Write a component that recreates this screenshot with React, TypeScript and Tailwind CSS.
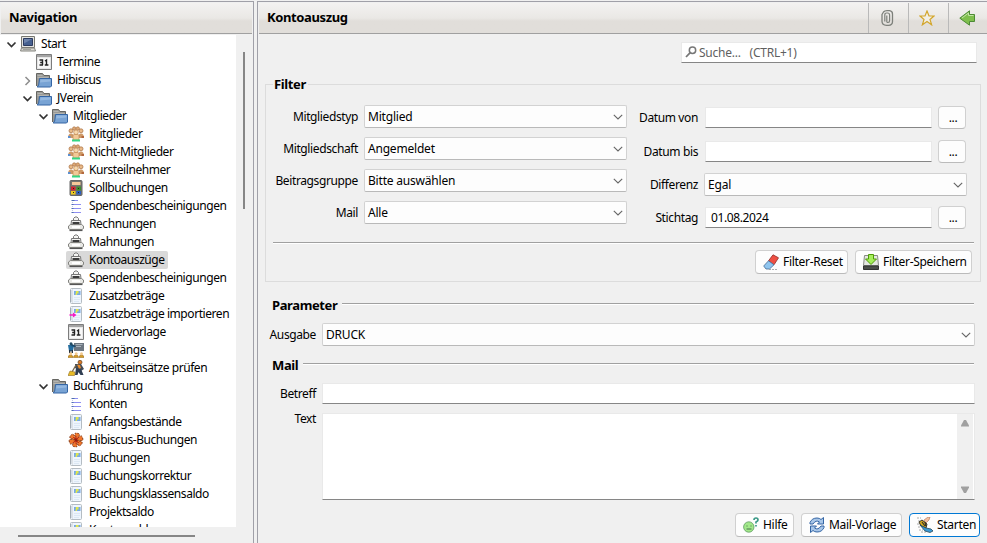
import { ReactNode } from "react";

type IconName =
  | "computer" | "calendar" | "folder" | "people" | "calc" | "list" | "printer"
  | "doc" | "docImport" | "teacher" | "worker" | "flower";

function Glyph({ name }: { name: IconName }) {
  switch (name) {
    case "computer":
      return (
        <>
          <path d="M1.500.5h13v11h-13z" fill="#e4e4e0" stroke="#777770" />
          <path d="M3.500 2.500h9v7h-9z" fill="#46608f" stroke="#2c3b60" />
          <path d="M4 3h8L4 7.500z" fill="#6d83ab" />
          <path d="M1.500 12h13l1 3H.5z" fill="#d8d8d3" stroke="#85857f" />
          <path d="M3 13.500h8" stroke="#a3a39d" />
        </>
      );
    case "calendar":
      return (
        <>
          <path d="M.5.5h15v15H.5z" fill="#e6e6e6" stroke="#7c7c7c" />
          <path d="M1 1h14v2H1z" fill="#a4a4a4" />
          <path d="M2 4h12v10H2z" fill="#f8f8f8" />
          <path d="M3.500 6h3v5M3.500 11h3.500M4.200 8.500h2.500M9 7l1.500-1v5M8.800 11h3.600" fill="none" stroke="#222" strokeWidth="1.400" />
        </>
      );
    case "folder":
      return (
        <>
          <path d="M.5 14V1.500h6l1.500 2h5.500v10" fill="#9a9a96" stroke="#666662" />
          <path d="M1.500 3.500h5M1.500 5.500h11" stroke="#b4b4b0" />
          <path d="M3.500 6.500h12v7.500l-1 1H1.200l1.500-2z" fill="#78a3d4" stroke="#3465a4" />
          <path d="M4.500 7.500h10v2l-10.500 1z" fill="#94b8e0" />
        </>
      );
    case "people":
      return (
        <>
          <path d="M0 12q0-4.500 3-4.500T6 12zM10 12q0-4.500 3-4.500t3 4.500z" fill="#cf9a68" />
          <path d="M0 10h2.500v2H0z" fill="#5b8fd0" />
          <path d="M13.500 10H16v2h-2.500z" fill="#b3683e" />
          <circle cx="3" cy="4.800" r="2" fill="#e9b987" stroke="#a66b3c" strokeWidth=".7" />
          <circle cx="13" cy="4.800" r="2" fill="#e9b987" stroke="#a66b3c" strokeWidth=".7" />
          <circle cx="6.200" cy="2.500" r="1.700" fill="#dca875" stroke="#a66b3c" strokeWidth=".6" />
          <circle cx="9.800" cy="2.500" r="1.700" fill="#dca875" stroke="#a66b3c" strokeWidth=".6" />
          <path d="M5 14V9q3-2 6 0v5z" fill="#f1c997" stroke="#bd8551" strokeWidth=".6" />
          <circle cx="8" cy="6.300" r="2.300" fill="#f7d9ad" stroke="#bd8551" strokeWidth=".7" />
          <path d="M4 13.500h8v2H4z" fill="#35d683" />
        </>
      );
    case "calc":
      return (
        <>
          <rect x="2" y=".5" width="12" height="15" rx="1" fill="#77756f" stroke="#666" />
          <path d="M4 2h8.500v3H4z" fill="#f6c999" />
          <path d="M3 6.500h4.500v4H3z" fill="#cf2430" />
          <path d="M8.500 6.500H13v4H8.500z" fill="#3b8f2d" />
          <path d="M3 11h4.500v3.500H3z" fill="#f0cb1e" />
          <path d="M8.500 11H13v3.500H8.500z" fill="#2b5fc4" />
          <path d="M5 8.500h1M10 8.500h1M5 12.500h1M10 12.500h1" stroke="#222" />
        </>
      );
    case "list":
      return (
        <>
          <path d="M4.500 2v12" stroke="#c3c3ee" strokeDasharray="1 1" />
          <path d="M5 2.500h5M5 6.500h8M5 10.500h8M5 14.500h8" stroke="#8f8ff2" strokeWidth="1.200" />
          <path d="M3.500 2.500h3M3.500 6.500h2M3.500 10.500h2M3.500 14.500h2" stroke="#4d6fae" strokeWidth="1.200" />
        </>
      );
    case "printer":
      return (
        <>
          <path d="M5.500 5V2.500L7 1h2l1.500 1.500V5" fill="#f4f4f2" stroke="#777" />
          <path d="M3.500 4.500h9l.5 4H3z" fill="#f2f2f0" stroke="#777" />
          <path d="M4.500 6h7v2.500h-7z" fill="#3c3c3c" />
          <path d="M.5 12.500V10L2.500 8.500h11l2 1.500v2.500l-1.500 1H2z" fill="#e9e9e6" stroke="#83837f" />
          <path d="M4 10h8v2H4z" fill="#fff" />
          <path d="M1.500 14.500h13" stroke="#555" strokeWidth="1.200" />
        </>
      );
    case "doc":
    case "docImport":
      return (
        <>
          <rect x="2.500" y=".5" width="11" height="15" rx="1" fill="#eef5fd" stroke="#b4bcc3" />
          <path d="M4.500 1v14" stroke="#dde2e7" />
          <path d="M2 3h1.500M2 5h1.500M2 7h1.500M2 9h1.500M2 11h1.500M2 13h1.500" stroke="#909aa3" />
          <path d="M6 3h6.500v4H6z" fill="#78a9e6" />
          <path d="M8 3h2.500v2.500H9V7H7.500z" fill="#dfe64a" />
          <path d="M6 9.500h6M6 11.500h6M6 13.500h5" stroke="#dce8f4" />
          {name === "docImport" && <path d="M1.500 8.200H5V6.500l3.500 2.500L5 11.500V9.800H1.500z" fill="#f51ac4" />}
        </>
      );
    case "teacher":
      return (
        <>
          <path d="M6 1h10v8H6z" fill="#6c7681" />
          <path d="M7.500 2.500h7M8 4.500h5" stroke="#aab4bd" />
          <path d="M0 3h3l3 1-1 5H1z" fill="#246d9f" />
          <path d="M4 2l4 2-1 1-4-1z" fill="#194769" />
          <circle cx="3" cy="1.700" r="1.500" fill="#234c65" />
          <path d="M1 8h1.500v3H1zM3.500 8h1.500v3H3.500z" fill="#24313e" />
          <path d="M0 15.500q0-2.500 2.500-2.500T5 15.500zM5.500 15.500q0-2.500 2.500-2.500t2.500 2.500zM11 15.500q0-2.500 2.500-2.500t2.500 2.500z" fill="#d79b22" stroke="#8a621d" strokeWidth=".5" />
          <circle cx="2.700" cy="11.800" r="1.500" fill="#f1c990" />
          <circle cx="8.200" cy="11.800" r="1.500" fill="#f1c990" />
          <circle cx="13.500" cy="11.800" r="1.500" fill="#f1c990" />
        </>
      );
    case "worker":
      return (
        <>
          <circle cx="12" cy="2.300" r="2" fill="#dc7b28" stroke="#604221" strokeWidth=".7" />
          <path d="M7 4l6 0 3 5-3 2-6-3z" fill="#454d58" />
          <path d="M9 4.500l3 .5 1 3-2 1z" fill="#ec8c29" />
          <path d="M8 8l5 1 2.500 6h-3l-2-3-1 3H7z" fill="#303e52" />
          <path d="M8 5L4 12" stroke="#7b694b" strokeWidth="1.300" />
          <path d="M2 11l5 1-.5 3.500H0z" fill="#e9bc25" stroke="#91702a" strokeWidth=".6" />
        </>
      );
    case "flower":
      return (
        <>
          {[0, 60, 120, 180, 240, 300].map((a) => (
            <path key={a} d="M8 8L5.600 3Q5.500.500 8 1.200q2.700-.5 2.300 2z" fill="#f0772c" stroke="#7d3412" strokeWidth=".9" strokeDasharray="2 1" transform={`rotate(${a + 12} 8 8)`} />
          ))}
          <path d="M5 5l6 6M5 11l6-6M8 4v8" stroke="#c7260d" strokeWidth=".9" />
          <circle cx="8" cy="8" r="1.400" fill="#971d10" />
        </>
      );
  }
}

function TreeIcon({ name }: { name: IconName }) {
  return (
    <svg viewBox="0 0 16 16" className="h-4 w-4 shrink-0"><Glyph name={name} /></svg>
  );
}

type Node = { label: string; icon: IconName; indent: string; open?: boolean; selected?: boolean };
const L1 = "pl-[3px]";
const L2 = "pl-[19px]";
const L3 = "pl-[35px]";
const L4 = "pl-[51px]";

const nodes: Node[] = [
  { label: "Start", icon: "computer", indent: L1, open: true },
  { label: "Termine", icon: "calendar", indent: L2 },
  { label: "Hibiscus", icon: "folder", indent: L2, open: false },
  { label: "JVerein", icon: "folder", indent: L2, open: true },
  { label: "Mitglieder", icon: "folder", indent: L3, open: true },
  { label: "Mitglieder", icon: "people", indent: L4 },
  { label: "Nicht-Mitglieder", icon: "people", indent: L4 },
  { label: "Kursteilnehmer", icon: "people", indent: L4 },
  { label: "Sollbuchungen", icon: "calc", indent: L4 },
  { label: "Spendenbescheinigungen", icon: "list", indent: L4 },
  { label: "Rechnungen", icon: "printer", indent: L4 },
  { label: "Mahnungen", icon: "printer", indent: L4 },
  { label: "Kontoauszüge", icon: "printer", indent: L4, selected: true },
  { label: "Spendenbescheinigungen", icon: "printer", indent: L4 },
  { label: "Zusatzbeträge", icon: "doc", indent: L4 },
  { label: "Zusatzbeträge importieren", icon: "docImport", indent: L4 },
  { label: "Wiedervorlage", icon: "calendar", indent: L4 },
  { label: "Lehrgänge", icon: "teacher", indent: L4 },
  { label: "Arbeitseinsätze prüfen", icon: "worker", indent: L4 },
  { label: "Buchführung", icon: "folder", indent: L3, open: true },
  { label: "Konten", icon: "list", indent: L4 },
  { label: "Anfangsbestände", icon: "doc", indent: L4 },
  { label: "Hibiscus-Buchungen", icon: "flower", indent: L4 },
  { label: "Buchungen", icon: "doc", indent: L4 },
  { label: "Buchungskorrektur", icon: "doc", indent: L4 },
  { label: "Buchungsklassensaldo", icon: "doc", indent: L4 },
  { label: "Projektsaldo", icon: "doc", indent: L4 },
  { label: "Kontensaldo", icon: "doc", indent: L4 },
];

function TreeRow({ node }: { node: Node }) {
  return (
    <div className={`flex h-[18px] shrink-0 items-center ${node.indent}`}>
      <svg viewBox="0 0 14 16" className="h-4 w-[14px] shrink-0">
        {node.open === true && <path d="M3.500 6.500l4 4 4-4" fill="none" stroke="#333" strokeWidth="1.700" />}
        {node.open === false && <path d="M5.500 5l4 4-4 4" fill="none" stroke="#8d8d8d" strokeWidth="1.500" />}
      </svg>
      <div className={`flex h-[18px] items-center rounded-[2px] pl-[2px] pr-[3px] ${node.selected ? "bg-[#d9d9d9]" : ""}`}>
        <TreeIcon name={node.icon} />
        <span className="ml-[5px] tracking-[-0.43px]">{node.label}</span>
      </div>
    </div>
  );
}

function Chevron() {
  return (
    <svg viewBox="0 0 10 6" className="h-[6px] w-[10px] shrink-0">
      <path d="M.8.8L5 5 9.200.8" fill="none" stroke="#666" strokeWidth="1.100" />
    </svg>
  );
}

function Combo({ value, className }: { value: string; className: string }) {
  return (
    <div className={`flex h-[23px] items-center justify-between rounded-[2px] border border-[#d2d2d2] border-b-[#b9b9b9] bg-[#fdfdfd] pl-[3px] pr-[3px] ${className}`}>
      <span className="tracking-[-0.2px]">{value}</span>
      <Chevron />
    </div>
  );
}

function Field({ value, className }: { value?: string; className: string }) {
  return (
    <div className={`flex h-[21px] items-center border border-b-[#868686] border-[#e9e9e9] bg-white pl-[5px] ${className}`}>{value}</div>
  );
}

function Button({ children, className, primary }: { children: ReactNode; className: string; primary?: boolean }) {
  return (
    <div className={`flex shrink-0 items-center rounded-[4px] border bg-[#fdfdfd] ${primary ? "border-[#0078d4]" : "border-[#d0d0d0] border-b-[#bbbbbb]"} ${className}`}>
      {children}
    </div>
  );
}

function DateRow({ label, value, className }: { label: string; value?: string; className: string }) {
  return (
    <div className={`flex h-[23px] items-center ${className}`}>
      <span className="w-[61px] text-right">{label}</span>
      <Field value={value} className="ml-[7px] w-[227px]" />
      <Button className="ml-[6px] h-[23px] w-[28px] justify-center pl-[2px]">...</Button>
    </div>
  );
}

function Rule({ title, className }: { title: string; className: string }) {
  return (
    <div className={`flex h-[18px] items-center ${className}`}>
      <span className="text-[13px] font-bold">{title}</span>
      <span className="ml-[5px] h-[2px] flex-1 -translate-y-[1px] border-t border-[#a0a0a0] bg-white" />
    </div>
  );
}

const headerBar = "flex h-[30px] items-center bg-linear-to-b from-[#f3f2f1] from-0% via-[#eae8e5] via-50% to-[#e1deda] to-60%";

export default function App() {
  return (
    <div className="flex h-[543px] w-[987px] overflow-hidden bg-[#f0f0f0] font-['Noto_Sans','Open_Sans',sans-serif] text-[12px] leading-[16px] tracking-[-0.38px] whitespace-nowrap text-black">
      <aside className="mt-[1px] flex w-[254px] flex-col border-t border-r border-[#a0a0a8]">
        <div className="mt-[1px] mr-[1px] ml-[1px] h-[31px] border-b border-[#a0a0a0]">
          <div className={`${headerBar} pb-[3px] pl-2`}>
            <h1 className="text-[13px] font-bold">Navigation</h1>
          </div>
        </div>
        <div className="flex h-[493px] pt-[1px]">
          <div className="flex w-[236px] flex-col overflow-hidden bg-white pl-[1px]">
            {nodes.map((n, i) => <TreeRow key={i} node={n} />)}
          </div>
          <div className="flex-1 pt-[17px] pl-[7px]">
            <div className="h-[157px] w-[2px] bg-[#868686]" />
          </div>
        </div>
        <div className="mt-[8px] ml-[18px] h-[2px] w-[177px] bg-[#868686]" />
      </aside>

      <main className="mt-[1px] ml-[3px] flex w-[730px] flex-col border-t border-l border-[#a0a0a8]">
        <div className="mt-[1px] ml-[1px] h-[31px] border-b border-[#a0a0a0]">
          <div className={`${headerBar} pl-2`}>
            <h1 className="flex-1 pb-[3px] text-[13px] font-bold">Kontoauszug</h1>
            <div className="flex h-[30px] w-[40px] items-center justify-center border-l border-[#b9b9b9] pr-[3px]">
              <svg viewBox="0 0 16 16" className="h-4 w-4">
                <path d="M3 4.500L4.500 2q1-1.300 3.500-1.300h2.500q3 .3 3 3.300v7.500q0 3.800-4 3.800H7.500q-4.500 0-4.500-4z" fill="none" stroke="#7d807b" strokeWidth="1.300" />
                <path d="M5.800 11.500V5q0-2 1.800-2h1q2 0 2 2v5.500q0 2-1.500 2T7.800 11V5.500" fill="none" stroke="#7d807b" strokeWidth="1.200" />
              </svg>
            </div>
            <div className="flex h-[30px] w-[40px] items-center justify-center border-l border-[#b9b9b9] pr-[3px]">
              <svg viewBox="0 0 16 16" className="h-4 w-4">
                <path d="M8 1l2 5h5l-4 3.500 1.600 5.300L8 11.500l-4.600 3.300L5 9.500 1 6h5z" fill="#f2efe6" stroke="#d3a62c" strokeWidth="1.200" />
              </svg>
            </div>
            <div className="flex h-[30px] w-[39px] items-center justify-center border-l border-[#b9b9b9] pr-[2px]">
              <svg viewBox="0 0 16 16" className="h-4 w-4">
                <path d="M.8 8.200L10.500.8v3.700h5v7h-5v3.700z" fill="#7fbf4d" stroke="#4c8a35" />
                <path d="M3 8l6.500-5V5.500h5" fill="none" stroke="#c3e3a5" />
              </svg>
            </div>
          </div>
        </div>

        <div className="mt-[8px] ml-[423px] flex h-[21px] w-[296px] items-center border border-[#e9e9e9] border-b-[#868686] bg-white pl-[3px] tracking-[-0.25px] text-[#5f5f5f]">
          <svg viewBox="0 0 12 12" className="h-3 w-3 -translate-y-[1px]">
            <circle cx="7.500" cy="4.300" r="3.200" fill="none" stroke="#777" strokeWidth="1.500" />
            <path d="M5 6.800L1 11" stroke="#777" strokeWidth="1.800" />
          </svg>
          <span className="ml-[2px]">Suche...</span>
          <span className="ml-[9px]">(CTRL+1)</span>
        </div>

        <fieldset className="mt-[13px] ml-[7px] h-[206px] w-[716px] border border-[#dcdcdc] pl-[7px]">
          <legend className="h-[16px] pr-[2px] pl-[1px] text-[13px] font-bold">Filter</legend>
          <div className="mt-[13px] flex">
            <div className="flex w-[354px] flex-col gap-[9px]">
              {[["Mitgliedstyp", "Mitglied"], ["Mitgliedschaft", "Angemeldet"], ["Beitragsgruppe", "Bitte auswählen"], ["Mail", "Alle"]].map(([label, value]) => (
                <div key={label} className="flex items-center">
                  <span className="w-[85px] text-right">{label}</span>
                  <Combo value={value} className="ml-[6px] w-[263px]" />
                </div>
              ))}
            </div>
            <div className="ml-[10px] w-[330px]">
              <DateRow label="Datum von" className="mt-[1px]" />
              <DateRow label="Datum bis" className="mt-[11px]" />
              <div className="mt-[10px] flex items-center">
                <span className="w-[61px] text-right">Differenz</span>
                <Combo value="Egal" className="ml-[6px] w-[263px]" />
              </div>
              <DateRow label="Stichtag" value="01.08.2024" className="mt-[10px]" />
            </div>
          </div>
          <div className="mt-[13px] h-[2px] w-[701px] border-t border-[#a0a0a0] bg-white" />
          <div className="mt-[6px] flex w-[699px] justify-end gap-[7px]">
            <Button className="h-[24px] w-[93px] pl-[7px]">
              <svg viewBox="0 0 16 16" className="h-4 w-4">
                <path d="M10 .8l5.500 3-4.500 7L5.500 6.800z" fill="#ef4f43" stroke="#8f2c27" strokeWidth=".8" />
                <path d="M5.500 6.800l5.500 4L6.500 15H3L.7 12z" fill="#8fc5ef" stroke="#486b93" strokeWidth=".8" />
                <path d="M6 15.500h9" stroke="#999" strokeWidth=".8" strokeDasharray="2 1" />
              </svg>
              <span className="ml-[4px] tracking-[-0.3px]">Filter-Reset</span>
            </Button>
            <Button className="h-[24px] w-[117px] pl-[7px]">
              <svg viewBox="0 0 16 16" className="h-4 w-4">
                <path d="M1.500 1.500h13l1 10H.5z" fill="#e5e7e2" stroke="#888b85" />
                <path d="M.5 12h15v3.500H.5z" fill="#4b4e4a" stroke="#333" />
                <path d="M5.500.5h5V5h3L8 10.500 2.500 5h3z" fill="#a5ee5c" stroke="#4e9a06" />
              </svg>
              <span className="ml-[4px] tracking-[-0.3px]">Filter-Speichern</span>
            </Button>
          </div>
        </fieldset>

        <Rule title="Parameter" className="mt-[14px] mr-[13px] ml-[14px]" />
        <div className="mt-[9px] flex items-center">
          <span className="w-[58px] text-right">Ausgabe</span>
          <Combo value="DRUCK" className="ml-[6px] w-[653px]" />
        </div>
        <Rule title="Mail" className="mt-[10px] mr-[13px] ml-[14px]" />
        <div className="mt-[9px] flex items-center">
          <span className="w-[58px] text-right">Betreff</span>
          <Field className="ml-[6px] w-[653px]" />
        </div>
        <div className="mt-[9px] flex">
          <span className="mt-[-2px] w-[58px] text-right">Text</span>
          <div className="ml-[6px] flex h-[87px] w-[653px] justify-end border border-[#e9e9e9] border-b-[#868686] bg-white pr-[1px]">
            <div className="flex w-[16px] flex-col items-center justify-between bg-[#f0f0f0] py-[6px]">
              <svg viewBox="0 0 8 7" className="h-[7px] w-2"><path d="M3 0h2l3 5.500v1H0v-1z" fill="#a0a0a0" /></svg>
              <svg viewBox="0 0 8 7" className="h-[7px] w-2"><path d="M3 7h2l3-5.500v-1H0v1z" fill="#a0a0a0" /></svg>
            </div>
          </div>
        </div>

        <div className="mt-[13px] flex w-[722px] justify-end gap-[7px]">
          <Button className="h-[24px] w-[59px] pl-[7px]">
            <svg viewBox="0 0 16 16" className="h-4 w-4">
              <circle cx="5.800" cy="10" r="5.200" fill="#a2e88a" stroke="#5f9b62" strokeWidth=".8" />
              <path d="M4 8.500v1M8 8.500v1M3.500 12h5" stroke="#47734c" />
              <path d="M11 3q0-2 2-2t2 2q0 1.200-2 2v1.500M13 8v1.500" fill="none" stroke="#3c9a88" strokeWidth="1.700" />
            </svg>
            <span className="ml-[4px] tracking-[-0.3px]">Hilfe</span>
          </Button>
          <Button className="h-[24px] w-[101px] pl-[7px]">
            <svg viewBox="0 0 16 16" className="h-4 w-4">
              <path d="M1 7V5.500Q3 1 8 1q2.500 0 4 1.500L14.500.5V7H8.500l2-2Q7 2.500 4 7z" fill="#a8c6e8" stroke="#3465a4" />
              <path d="M15 9v1.500Q13 15 8 15q-2.500 0-4-1.500L1.500 15.500V9h6l-2 2Q9 13.500 12 9z" fill="#a8c6e8" stroke="#3465a4" />
            </svg>
            <span className="ml-[4px] tracking-[-0.3px]">Mail-Vorlage</span>
          </Button>
          <Button primary className="h-[24px] w-[71px] pl-[7px]">
            <svg viewBox="0 0 16 16" className="h-4 w-4">
              <path d="M0 1h4M1 4h3M0 7h3M1 10h3M2 13h4M4 15h5" stroke="#aaa" strokeDasharray="2 1" />
              <path d="M7 3l4-3h2l-1 3-4 4z" fill="#f4bf9d" stroke="#a97157" strokeWidth=".6" />
              <path d="M2 5l3-2 5 4-1 4-5-2z" fill="#d6a91c" stroke="#373329" />
              <path d="M5 5l3 4M8 5l1 4" stroke="#373329" strokeWidth="1.200" />
              <path d="M3 8l6 3 5 1 2 2-3 1.500-5-1.500z" fill="#3b9bd6" stroke="#28495c" strokeWidth=".8" />
            </svg>
            <span className="ml-[4px] tracking-[-0.3px]">Starten</span>
          </Button>
        </div>
      </main>
    </div>
  );
}
